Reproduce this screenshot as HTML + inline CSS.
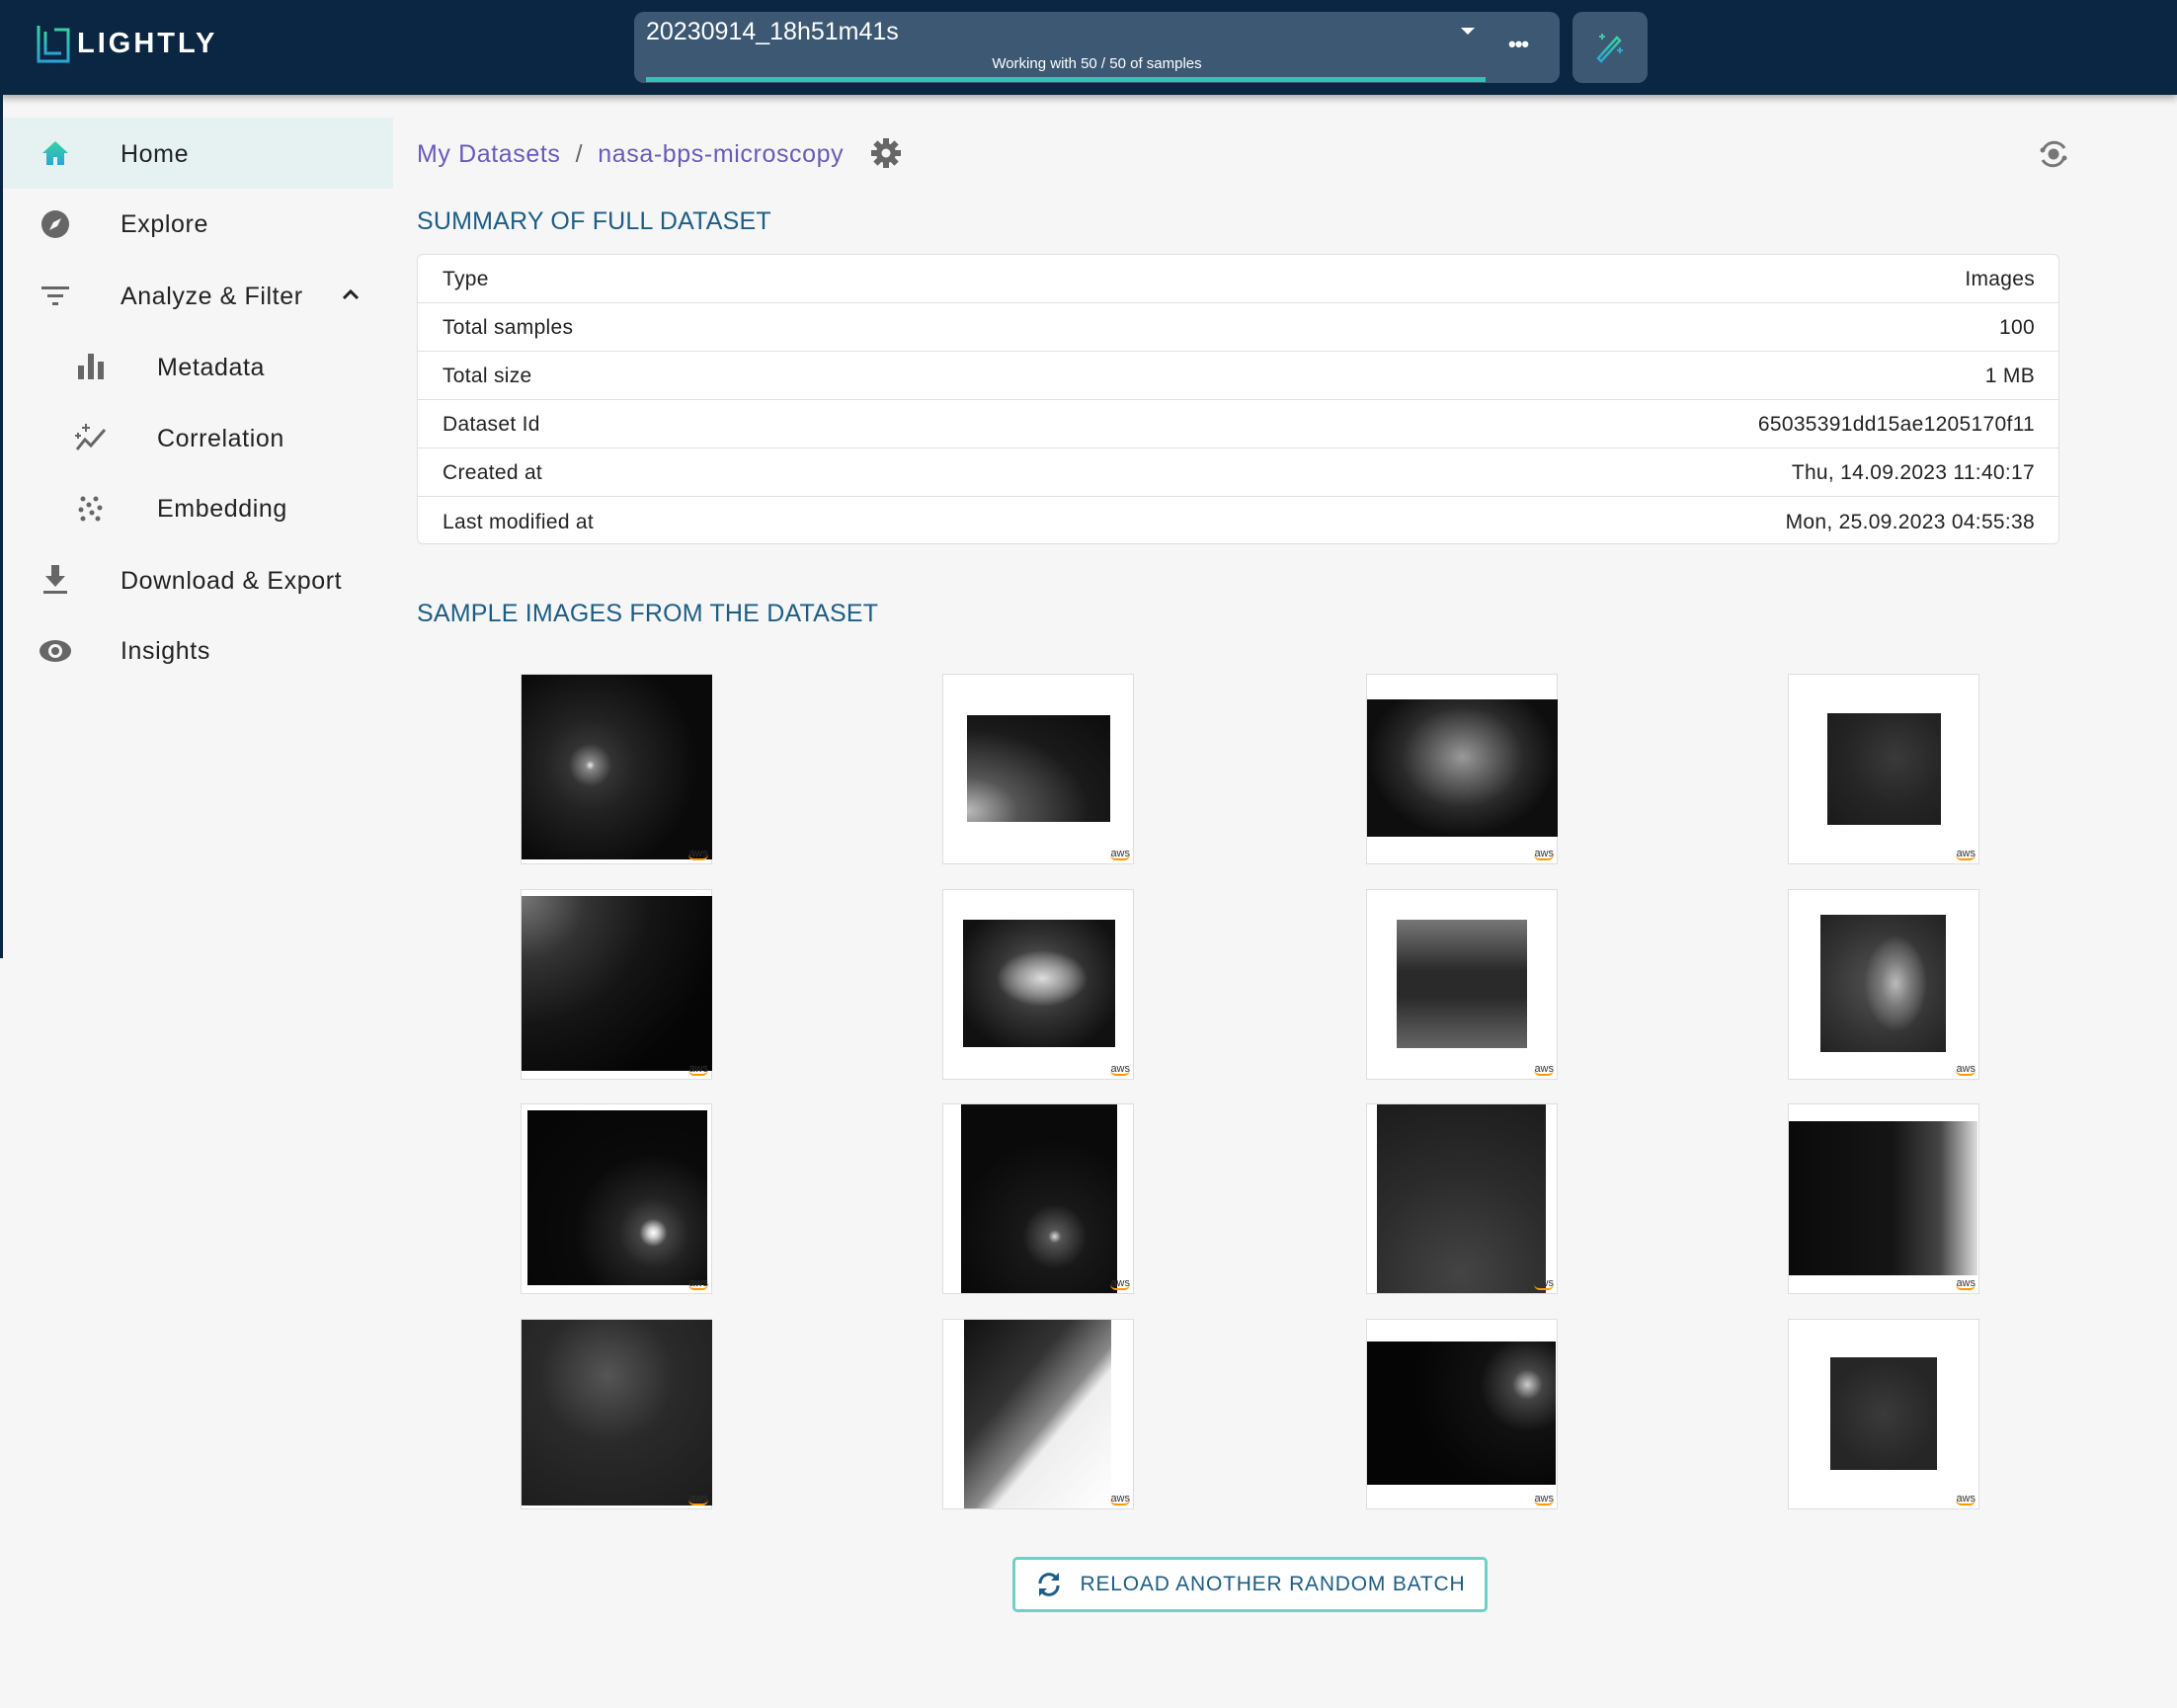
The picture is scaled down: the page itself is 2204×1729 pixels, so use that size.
<!DOCTYPE html>
<html><head><meta charset="utf-8"><style>
*{box-sizing:border-box;margin:0;padding:0}
body{width:2204px;height:1729px;background:#f6f6f6;font-family:"Liberation Sans",sans-serif;position:relative;overflow:hidden;color:#222}
.hdr{position:absolute;left:0;top:0;width:2204px;height:96px;background:#0b2642;box-shadow:0 3px 8px rgba(0,0,0,.35)}
.leftbar{position:absolute;left:0;top:96px;width:3px;height:874px;background:#0b2642}
.sel{position:absolute;left:642px;top:12px;width:937px;height:72px;background:#3d5873;border-radius:10px}
.wand{position:absolute;left:1592px;top:12px;width:76px;height:72px;background:#3d5873;border-radius:10px}
.nav{position:absolute;font-size:25px;color:#222;letter-spacing:.6px}
.ic{position:absolute}
.title{position:absolute;left:422px;font-size:25px;color:#1d5d85;letter-spacing:.2px}
.tbl{position:absolute;left:422px;top:257px;width:1663px;height:294px;background:#fff;border:1px solid #e0e0e0;border-radius:6px}
.row{height:49px;border-bottom:1px solid #e0e0e0;display:flex;justify-content:space-between;align-items:center;padding:2px 24px 0 25px;font-size:21px;color:#222;letter-spacing:.3px}
.row:last-child{border-bottom:none}
.card{position:absolute;width:194px;height:193px;background:#fff;border:1px solid #ddd}
.im{position:absolute;background:#111}
.aws{position:absolute;right:3px;bottom:3px;font-size:11px;color:#333;line-height:10px;border-bottom:2px solid #f90;border-radius:0 0 6px 6px}
.btn{position:absolute;left:1025px;top:1576px;width:481px;height:56px;border:3px solid #6cd1c7;border-radius:5px;background:#fff;display:flex;align-items:center;justify-content:center;font-size:21px;color:#1d5d85;letter-spacing:.8px}
</style></head><body>
<div class="hdr">
 <svg style="position:absolute;left:36px;top:24px" width="36" height="40" viewBox="0 0 36 40"><defs><linearGradient id="g" x1="0" y1="0" x2="0" y2="1"><stop offset="0" stop-color="#36d39e"/><stop offset="1" stop-color="#2aa6d6"/></linearGradient></defs><path d="M3 2v36h30V6h-14" fill="none" stroke="url(#g)" stroke-width="3"/><path d="M10 8v22h16" fill="none" stroke="url(#g)" stroke-width="3"/></svg>
 <div style="position:absolute;left:78px;top:28px;font-size:29px;color:#fff;letter-spacing:3px;font-weight:bold">LIGHTLY</div>
 <div class="sel">
  <div style="position:absolute;left:12px;top:6px;font-size:25px;color:#fff">20230914_18h51m41s</div>
  <div style="position:absolute;left:837px;top:16px;width:0;height:0;border-left:7px solid transparent;border-right:7px solid transparent;border-top:7px solid #fff"></div>
  <div style="position:absolute;left:885px;top:20px;font-size:22px;color:#fff;font-weight:bold;letter-spacing:-1px">•••</div>
  <div style="position:absolute;left:0;width:100%;text-align:center;top:44px;font-size:15px;color:#fff">Working with 50 / 50 of samples</div>
  <div style="position:absolute;left:12px;top:66px;width:850px;height:5px;background:#2ec4b6"></div>
 </div>
 <div class="wand"><svg style="position:absolute;left:22px;top:20px" width="34" height="34" viewBox="0 0 34 34"><defs><linearGradient id="w" x1="0" y1="0" x2="0" y2="1"><stop offset="0" stop-color="#36d39e"/><stop offset="1" stop-color="#2aa6d6"/></linearGradient></defs><path d="M4 27l19-21 3 3-19 21z" fill="none" stroke="url(#w)" stroke-width="2.5"/><path d="M8 2v6M5 5h6M26 16v6M23 19h6" stroke="url(#w)" stroke-width="2"/></svg></div>
</div>
<div class="leftbar"></div>
<div style="position:absolute;left:3px;top:119px;width:395px;height:72px;background:#e6f2f2"></div>
<svg class="ic" style="left:42px;top:142px" width="28" height="26" viewBox="0 0 28 26"><defs><linearGradient id="h" x1="0" y1="0" x2="0" y2="1"><stop offset="0" stop-color="#36d39e"/><stop offset="1" stop-color="#2aa6d6"/></linearGradient></defs><path d="M14 1L1 13h4v12h7v-8h4v8h7V13h4z" fill="url(#h)"/></svg>
<div class="nav" style="left:122px;top:142px">Home</div>
<svg class="ic" style="left:41px;top:212px" width="30" height="30" viewBox="0 0 30 30"><circle cx="15" cy="15" r="14" fill="#666"/><path d="M21 9l-4 8-8 4 4-8z" fill="#f6f6f6"/></svg>
<div class="nav" style="left:122px;top:213px">Explore</div>
<svg class="ic" style="left:42px;top:288px" width="28" height="22" viewBox="0 0 28 22"><rect x="0" y="2" width="28" height="3" fill="#666"/><rect x="6" y="10" width="16" height="3" fill="#666"/><rect x="11" y="18" width="6" height="3" fill="#666"/></svg>
<div class="nav" style="left:122px;top:286px">Analyze &amp; Filter</div>
<svg class="ic" style="left:346px;top:292px" width="18" height="12" viewBox="0 0 18 12"><path d="M2 10l7-7 7 7" fill="none" stroke="#222" stroke-width="3"/></svg>
<svg class="ic" style="left:79px;top:358px" width="26" height="26" viewBox="0 0 26 26"><rect x="0" y="12" width="6" height="14" fill="#666"/><rect x="10" y="0" width="6" height="26" fill="#666"/><rect x="20" y="8" width="6" height="18" fill="#666"/></svg>
<div class="nav" style="left:159px;top:358px">Metadata</div>
<svg class="ic" style="left:75px;top:428px" width="34" height="30" viewBox="0 0 34 30"><path d="M3 27l8-10 6 6 14-16" fill="none" stroke="#666" stroke-width="3"/><path d="M12 1v8M8 5h8M4 10v6M1 13h6" stroke="#666" stroke-width="2"/></svg>
<div class="nav" style="left:159px;top:430px">Correlation</div>
<svg class="ic" style="left:79px;top:502px" width="26" height="26" viewBox="0 0 26 26" fill="#666"><circle cx="5" cy="3" r="2.5"/><circle cx="18" cy="3" r="2.5"/><circle cx="11" cy="9" r="2.5"/><circle cx="22" cy="12" r="2.5"/><circle cx="3" cy="14" r="2.5"/><circle cx="14" cy="17" r="2.5"/><circle cx="5" cy="23" r="2.5"/><circle cx="20" cy="23" r="2.5"/></svg>
<div class="nav" style="left:159px;top:501px">Embedding</div>
<svg class="ic" style="left:44px;top:572px" width="24" height="30" viewBox="0 0 24 30"><path d="M8 0h8v11h6L12 22 2 11h6z" fill="#666"/><rect x="0" y="26" width="24" height="3" fill="#666"/></svg>
<div class="nav" style="left:122px;top:574px">Download &amp; Export</div>
<svg class="ic" style="left:39px;top:647px" width="34" height="24" viewBox="0 0 34 24"><ellipse cx="17" cy="12" rx="16" ry="11" fill="#666"/><circle cx="17" cy="12" r="7" fill="#f6f6f6"/><circle cx="17" cy="12" r="4" fill="#666"/></svg>
<div class="nav" style="left:122px;top:645px">Insights</div>

<div style="position:absolute;left:422px;top:142px;font-size:25px;color:#6a5ab8;letter-spacing:.6px">My Datasets <span style="color:#666">&nbsp;/&nbsp;</span> nasa-bps-microscopy</div>
<svg class="ic" style="left:882px;top:140px" width="30" height="30" viewBox="0 0 30 30"><g fill="#666"><circle cx="15" cy="15" r="10"/><rect x="12" y="0" width="6" height="30"/><rect x="0" y="12" width="30" height="6"/><rect x="12" y="0" width="6" height="30" transform="rotate(45 15 15)"/><rect x="12" y="0" width="6" height="30" transform="rotate(-45 15 15)"/></g><circle cx="15" cy="15" r="4.5" fill="#f6f6f6"/></svg>
<svg class="ic" style="left:2064px;top:141px" width="30" height="30" viewBox="0 0 30 30"><path d="M5 10A12 12 0 0 1 26 9M25 20A12 12 0 0 1 4 21" fill="none" stroke="#777" stroke-width="3"/><circle cx="15" cy="15" r="5.5" fill="#777"/><circle cx="4" cy="11" r="2.5" fill="#777"/><circle cx="26" cy="19" r="2.5" fill="#777"/></svg>

<div class="title" style="top:210px">SUMMARY OF FULL DATASET</div>
<div class="tbl">
 <div class="row"><span>Type</span><span>Images</span></div>
 <div class="row"><span>Total samples</span><span>100</span></div>
 <div class="row"><span>Total size</span><span>1 MB</span></div>
 <div class="row"><span>Dataset Id</span><span>65035391dd15ae1205170f11</span></div>
 <div class="row"><span>Created at</span><span>Thu, 14.09.2023 11:40:17</span></div>
 <div class="row"><span>Last modified at</span><span>Mon, 25.09.2023 04:55:38</span></div>
</div>
<div class="title" style="top:607px">SAMPLE IMAGES FROM THE DATASET</div>

<!-- row 1 -->
<div class="card" style="left:527px;top:682px"><div class="im" style="left:0;top:0;width:193px;height:187px;background:radial-gradient(circle at 36% 49%,#eee 0,#888 3%,#333 14%,#222 30%,#0a0a0a 70%),#000"></div><div class="aws">aws</div></div>
<div class="card" style="left:954px;top:682px"><div class="im" style="left:24px;top:41px;width:145px;height:108px;background:radial-gradient(ellipse at 0% 90%,#bbb 0,#555 25%,#1a1a1a 60%,#0c0c0c 100%)"></div><div class="aws">aws</div></div>
<div class="card" style="left:1383px;top:682px"><div class="im" style="left:0;top:25px;width:193px;height:139px;background:radial-gradient(ellipse at 50% 42%,#999 0,#666 20%,#2a2a2a 45%,#0e0e0e 70%)"></div><div class="aws">aws</div></div>
<div class="card" style="left:1810px;top:682px"><div class="im" style="left:39px;top:39px;width:115px;height:113px;background:radial-gradient(circle at 60% 40%,#3a3a3a 0,#252525 50%,#1a1a1a 100%)"></div><div class="aws">aws</div></div>
<!-- row 2 -->
<div class="card" style="left:527px;top:900px"><div class="im" style="left:0;top:6px;width:193px;height:177px;background:radial-gradient(circle at 0% 0%,#777 0,#333 25%,#151515 50%,#050505 80%)"></div><div class="aws">aws</div></div>
<div class="card" style="left:954px;top:900px"><div class="im" style="left:20px;top:30px;width:154px;height:129px;background:radial-gradient(ellipse 30% 22% at 52% 46%,#ddd 0,#999 50%,transparent 100%),radial-gradient(ellipse at 50% 45%,#666 0,#333 40%,#111 80%)"></div><div class="aws">aws</div></div>
<div class="card" style="left:1383px;top:900px"><div class="im" style="left:30px;top:30px;width:132px;height:130px;background:linear-gradient(180deg,#777 0,#2a2a2a 40%,#2a2a2a 60%,#666 100%)"></div><div class="aws">aws</div></div>
<div class="card" style="left:1810px;top:900px"><div class="im" style="left:32px;top:25px;width:127px;height:139px;background:radial-gradient(ellipse 25% 35% at 60% 50%,#bbb 0,#777 50%,transparent 100%),radial-gradient(circle at 50% 50%,#555 0,#333 60%,#222 100%)"></div><div class="aws">aws</div></div>
<!-- row 3 -->
<div class="card" style="left:527px;top:1117px"><div class="im" style="left:6px;top:6px;width:182px;height:177px;background:radial-gradient(circle at 70% 70%,#fff 0,#ccc 3%,#444 8%,#222 20%,#0a0a0a 45%,#050505 100%)"></div><div class="aws">aws</div></div>
<div class="card" style="left:954px;top:1117px"><div class="im" style="left:18px;top:0;width:158px;height:191px;background:radial-gradient(circle at 60% 70%,#ddd 0,#555 4%,#181818 20%,#0a0a0a 60%)"></div><div class="aws">aws</div></div>
<div class="card" style="left:1383px;top:1117px"><div class="im" style="left:10px;top:0;width:171px;height:191px;background:radial-gradient(circle at 50% 90%,#444 0,#2c2c2c 50%,#1c1c1c 100%)"></div><div class="aws">aws</div></div>
<div class="card" style="left:1810px;top:1117px"><div class="im" style="left:0;top:17px;width:191px;height:156px;background:linear-gradient(90deg,#0a0a0a 0,#151515 55%,#444 80%,#ddd 100%)"></div><div class="aws">aws</div></div>
<!-- row 4 -->
<div class="card" style="left:527px;top:1335px"><div class="im" style="left:0;top:0;width:193px;height:188px;background:radial-gradient(circle at 45% 30%,#555 0,#2a2a2a 40%,#1c1c1c 100%)"></div><div class="aws">aws</div></div>
<div class="card" style="left:954px;top:1335px"><div class="im" style="left:21px;top:0;width:149px;height:191px;background:linear-gradient(130deg,#111 0,#333 35%,#888 55%,#eee 62%,#fff 100%)"></div><div class="aws">aws</div></div>
<div class="card" style="left:1383px;top:1335px"><div class="im" style="left:0;top:22px;width:191px;height:145px;background:radial-gradient(circle at 85% 30%,#ccc 0,#444 8%,#111 25%,#050505 60%)"></div><div class="aws">aws</div></div>
<div class="card" style="left:1810px;top:1335px"><div class="im" style="left:42px;top:38px;width:108px;height:114px;background:radial-gradient(circle at 50% 50%,#3a3a3a 0,#262626 70%)"></div><div class="aws">aws</div></div>

<div class="btn"><svg width="28" height="26" viewBox="0 0 28 26" style="margin-right:18px"><path d="M5 12A9 9 0 0 1 21 6M23 14A9 9 0 0 1 7 20" fill="none" stroke="#1d5d85" stroke-width="3"/><path d="M24 1v8h-8z" fill="#1d5d85"/><path d="M4 25v-8h8z" fill="#1d5d85"/></svg>RELOAD ANOTHER RANDOM BATCH</div>
</body></html>
